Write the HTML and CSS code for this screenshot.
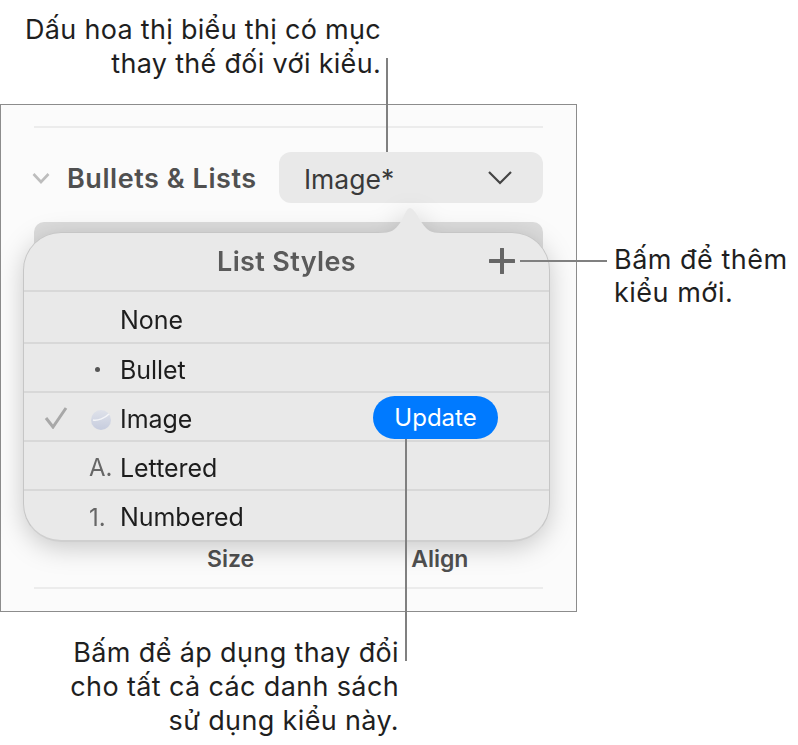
FILE: index.html
```html
<!DOCTYPE html>
<html lang="vi">

<head>
  <meta charset="UTF-8" />
  <meta name="viewport" content="width=device-width, initial-scale=1.0" />
  <title>List Styles</title>
  <link rel="stylesheet" href="styles.css">
</head>

<body>
  <div class="figure">
    <p class="note note-top">Dấu hoa thị biểu thị có mục<br>thay thế đối với kiểu.</p>

    <div class="panel">
      <div class="rule"></div>
      <div class="section-head">
        <svg class="section-chevron" width="18" height="12" viewBox="0 0 18 12">
          <path d="M1.5 2 L9 10 L16.5 2" fill="none" stroke="#bdbdbd" stroke-width="2.6" />
        </svg>
        <span class="section-title">Bullets &amp; Lists</span>
        <div class="select">
          <span class="select-value">Image*</span>
          <svg width="26" height="15" viewBox="0 0 26 15">
            <path d="M2 2 L13 13 L24 2" fill="none" stroke="#444" stroke-width="2.2" />
          </svg>
        </div>
      </div>
      <div class="under-bar"></div>
      <div class="labels">
        <span class="label-size">Size</span>
        <span class="label-align">Align</span>
      </div>
      <div class="rule"></div>
    </div>

    <div class="popover">
      <svg class="popover-tail" width="64" height="27" viewBox="0 0 64 27">
        <path d="M0 26 C14 26 17 23 22 16 C26 10 28 1 32 1 C36 1 40 10 44 16 C49 23 52 26 64 26 L64 27 L0 27 Z" fill="#e9e9e9" />
      </svg>
      <div class="popover-head">
        <span class="popover-title">List Styles</span>
        <svg class="plus" width="26" height="26" viewBox="0 0 26 26">
          <path d="M13 1 V25 M1 13 H25" stroke="#666" stroke-width="4" stroke-linecap="round" />
        </svg>
      </div>
      <div class="row row-first">
        <span class="marker"></span>
        <span class="row-label">None</span>
      </div>
      <div class="row">
        <span class="marker"><span class="dot"></span></span>
        <span class="row-label">Bullet</span>
      </div>
      <div class="row">
        <svg class="check" width="24" height="23" viewBox="0 0 24 23">
          <path d="M2 12 L9 21 L22 2" fill="none" stroke="#a8a8a8" stroke-width="3" />
        </svg>
        <span class="marker">
          <svg class="disc" width="22" height="22" viewBox="0 0 22 22">
            <defs>
              <linearGradient id="disc" x1="0" y1="0" x2="0" y2="1">
                <stop offset="0" stop-color="#dfe2ea" />
                <stop offset="1" stop-color="#c6ccde" />
              </linearGradient>
            </defs>
            <circle cx="11" cy="11" r="10" fill="url(#disc)" />
            <path d="M3 11 C8 12 15 9 19 5" fill="none" stroke="#f4f5f8" stroke-width="1.5" />
          </svg>
        </span>
        <span class="row-label">Image</span>
        <span class="update">Update</span>
      </div>
      <div class="row">
        <span class="marker marker-text">A.</span>
        <span class="row-label">Lettered</span>
      </div>
      <div class="row row-last">
        <span class="marker marker-text">1.</span>
        <span class="row-label">Numbered</span>
      </div>
    </div>

    <p class="note note-bottom">Bấm để áp dụng thay đổi<br>cho tất cả các danh sách<br>sử dụng kiểu này.</p>
    <p class="note note-right">Bấm để thêm<br>kiểu mới.</p>

    <div class="leader leader-top"></div>
    <div class="leader leader-right"></div>
    <div class="leader leader-bottom"></div>
  </div>
</body>

</html>
```

FILE: styles.css
```css
* {
  margin: 0;
  padding: 0;
  box-sizing: border-box;
  font-family: 'Inter', 'Liberation Sans', sans-serif;
}

body {
  background-color: #fff;
  color: #1d1d1d;
}

.figure {
  position: relative;
  width: 798px;
  height: 745px;
  padding-top: 13px;
  overflow: hidden;
}

.note {
  font-size: 27px;
  line-height: 34px;
  color: #1f1f1f;
  letter-spacing: 0.3px;
}

.note-top {
  width: 381px;
  height: 91px;
  text-align: right;
}

.note-bottom {
  width: 399px;
  margin-top: 24px;
  text-align: right;
  letter-spacing: 0.36px;
}

.note-right {
  position: absolute;
  left: 614px;
  top: 243px;
  line-height: 33px;
  letter-spacing: 0.5px;
}

/* sidebar panel */
.panel {
  width: 577px;
  height: 508px;
  border: 1px solid #8c8c8c;
  background-color: #fbfbfb;
  padding: 21px 33px 0;
}

.rule {
  height: 2px;
  background-color: #ececec;
}

.section-head {
  display: flex;
  align-items: center;
  height: 51px;
  margin-top: 24px;
}

.section-chevron {
  margin-left: -2px;
}

.section-title {
  margin-left: 17px;
  padding-top: 2px;
  font-size: 27px;
  font-weight: 600;
  color: #505050;
  letter-spacing: 0.55px;
}

.select {
  display: flex;
  align-items: center;
  justify-content: space-between;
  width: 264px;
  height: 51px;
  margin-left: auto;
  padding: 0 30px 0 25px;
  background-color: #e9e9e9;
  border-radius: 12px;
  color: #3a3a3a;
}

.select-value {
  padding-top: 2px;
  font-size: 26.5px;
}

.under-bar {
  height: 60px;
  margin-top: 19px;
  background-color: #dcdcdc;
  border-radius: 10px 10px 0 0;
}

.labels {
  display: flex;
  height: 40px;
  margin-top: 263px;
  font-size: 23px;
  font-weight: 600;
  color: #505050;
}

.label-size {
  margin-left: 173px;
}

.label-align {
  margin-left: 157px;
}

.labels + .rule {
  margin-top: 2px;
}

/* popover */
.popover {
  position: absolute;
  left: 23px;
  top: 232px;
  width: 527px;
  height: 310px;
  background-color: #e9e9e9;
  border: 1px solid #c6c6c6;
  border-bottom: 2px solid #cfcfcf;
  border-radius: 38px;
  filter: drop-shadow(0 6px 13px rgba(0, 0, 0, 0.2));
}

.popover-tail {
  position: absolute;
  left: 354px;
  top: -26px;
}

.popover-head {
  position: relative;
  display: flex;
  align-items: center;
  justify-content: center;
  height: 57px;
}

.popover-title {
  font-size: 27px;
  font-weight: 600;
  color: #5a5a5a;
  letter-spacing: 0.35px;
}

.plus {
  position: absolute;
  left: 465px;
  top: 15px;
}

.row {
  position: relative;
  display: flex;
  align-items: center;
  height: 49px;
  padding: 4px 0 0 60px;
  border-top: 2px solid #d8d8d8;
}

.row-first {
  height: 52px;
  padding-top: 5px;
}

.row-last {
  height: 50px;
}

.marker {
  display: flex;
  align-items: center;
  justify-content: center;
  width: 36px;
  font-size: 24px;
  color: #666;
}

.marker-text {
  justify-content: flex-start;
  padding-left: 5px;
}

.dot {
  width: 5px;
  height: 5px;
  margin-right: 10px;
  border-radius: 50%;
  background-color: #555;
}

.disc {
  margin: 2px 3px 0 0;
}

.check {
  position: absolute;
  left: 20px;
  top: 13px;
}

.row-label {
  font-size: 25px;
  color: #1d1d1d;
  letter-spacing: -0.05px;
}

.update {
  position: absolute;
  left: 349px;
  top: 3px;
  width: 125px;
  height: 43px;
  background-color: #007aff;
  border-radius: 22px;
  color: #fff;
  font-size: 24px;
  line-height: 43px;
  text-align: center;
}

/* callout lines */
.leader {
  position: absolute;
  background-color: #808080;
}

.leader-top {
  left: 386px;
  top: 58px;
  width: 2px;
  height: 94px;
}

.leader-right {
  left: 520px;
  top: 260px;
  width: 87px;
  height: 2px;
}

.leader-bottom {
  left: 405px;
  top: 439px;
  width: 2px;
  height: 222px;
}
```
